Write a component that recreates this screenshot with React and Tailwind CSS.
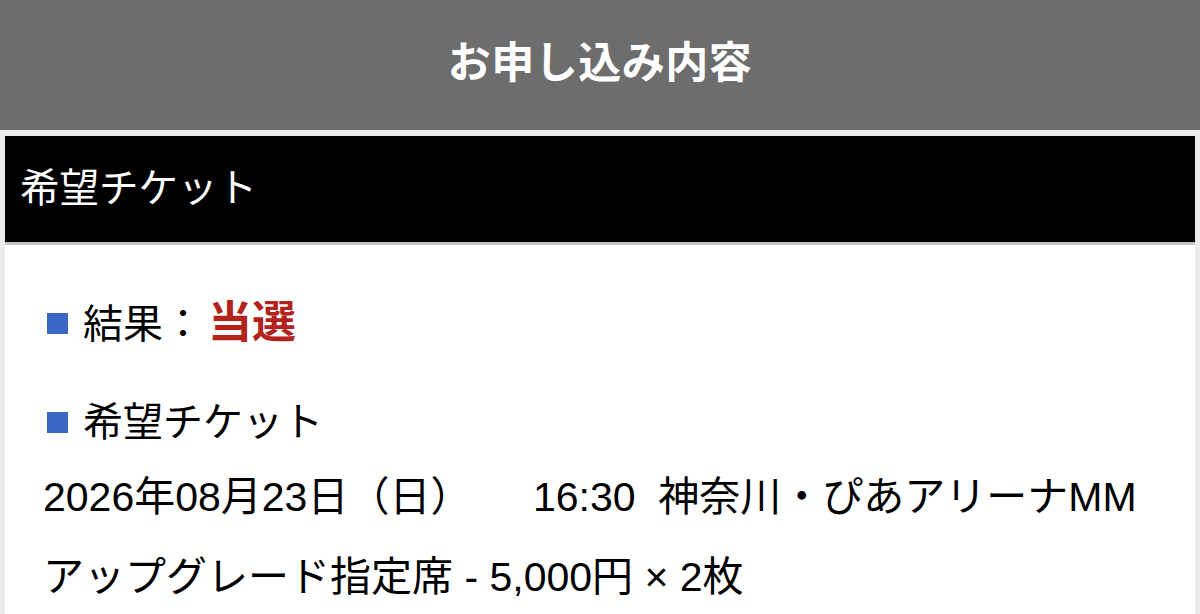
import React from 'react';

const font = { fontFamily: '"Liberation Sans", "Noto Sans CJK JP", sans-serif' };

const Bullet = ({ children }) => (
  <div className="flex items-center h-[60px] pl-[4px]">
    <span className="w-[21px] h-[21px] bg-[#3c66c6] shrink-0" />
    <span className="ml-[15px] text-[40px] text-black leading-none">{children}</span>
  </div>
);

export default function App() {
  return (
    <div className="min-h-screen bg-[#ebebeb] overflow-hidden" style={font}>
      {/* page title */}
      <div className="h-[130px] bg-[#6d6d6d] flex items-center justify-center pb-[3px]">
        <h1 className="text-white text-[43px] font-bold leading-none tracking-[0.5px]">お申し込み内容</h1>
      </div>

      <div className="px-[5px] pt-[6px]">
        {/* section heading */}
        <div className="h-[109px] bg-black border-b-[3px] border-[#c4c4c4] flex items-center px-[15px]">
          <h2 className="text-white text-[39.5px] leading-none">希望チケット</h2>
        </div>

        {/* section body */}
        <div className="bg-white pl-[38px] pr-4 pt-[48px] pb-10">
          <Bullet>
            結果：<span className="ml-[5px] text-[44px] font-bold text-[#b3231b]">当選</span>
          </Bullet>
          <div className="mt-[39px]">
            <Bullet>希望チケット</Bullet>
          </div>
          <div className="mt-[5px] text-[41px] leading-[80px] text-black whitespace-nowrap">
            <p>2026年08月23日（日）　　16:30&nbsp;&nbsp;神奈川・ぴあアリーナMM</p>
            <p>アップグレード指定席 - 5,000円 × 2枚</p>
          </div>
        </div>
      </div>
    </div>
  );
}
